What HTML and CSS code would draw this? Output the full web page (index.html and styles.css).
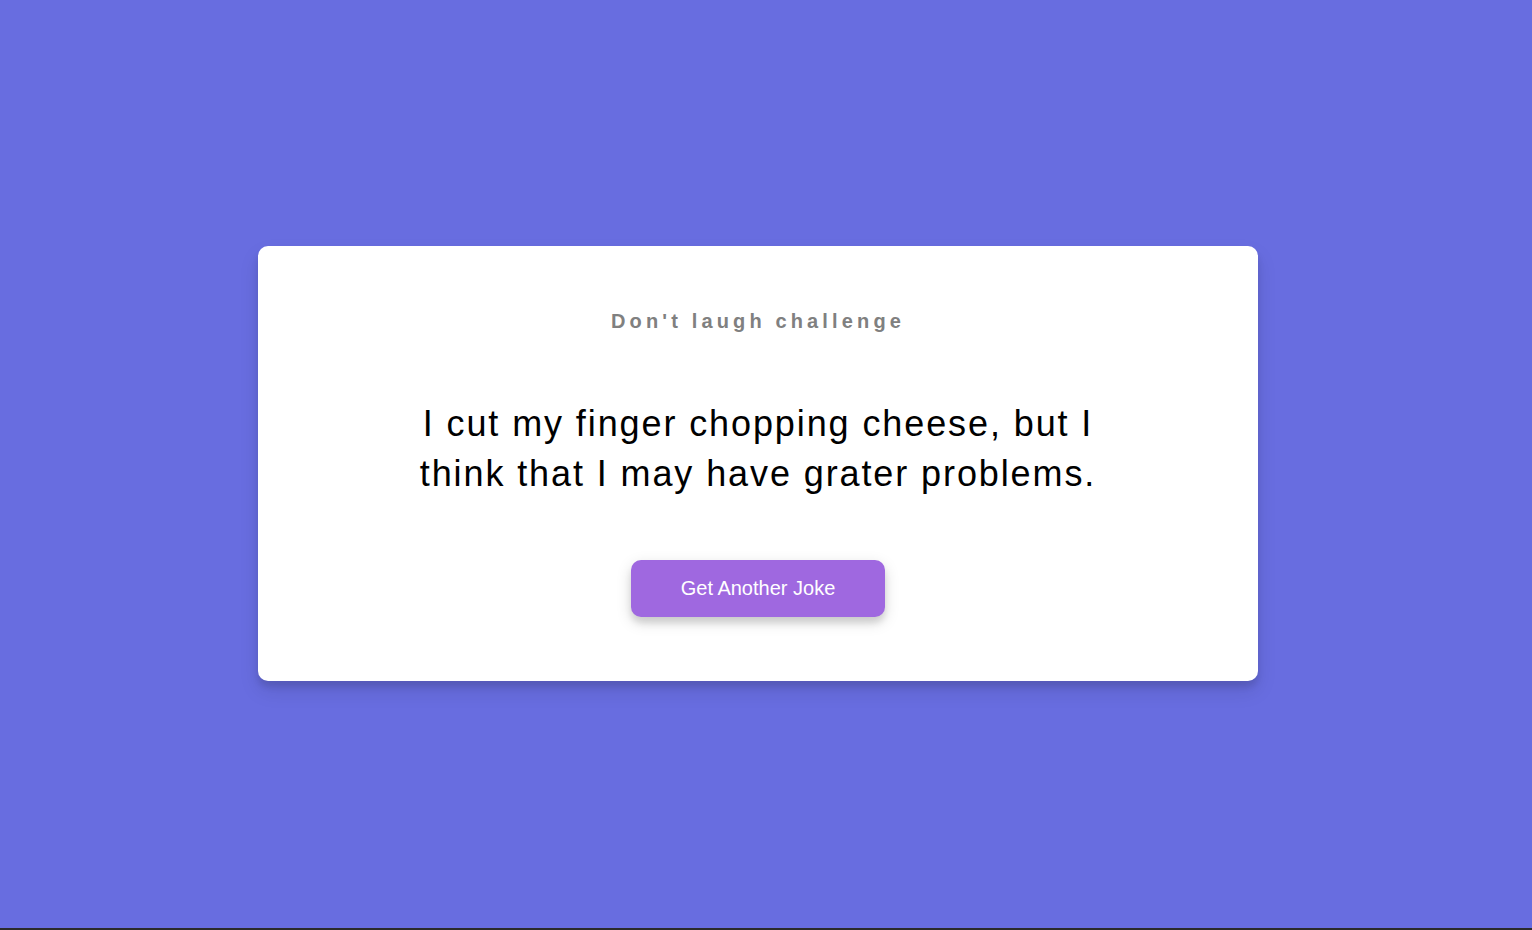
FILE: index.html
```html
<!DOCTYPE html>
<html lang="en">
<head>
<meta charset="UTF-8">
<title>Dad Jokes</title>
<link rel="stylesheet" href="styles.css">
</head>
<body>
  <div class="container">
    <h3 class="title">Don't laugh challenge</h3>
    <div class="joke">I cut my finger chopping cheese, but I think that I may have grater problems.</div>
    <button class="btn">Get Another Joke</button>
  </div>
</body>
</html>
```

FILE: styles.css
```css
* {
  box-sizing: border-box;
}

html, body {
  margin: 0;
}

body {
  background-color: #686de0;
  font-family: "Liberation Sans", Arial, sans-serif;
  display: flex;
  flex-direction: column;
  align-items: center;
  justify-content: center;
  height: 100vh;
  overflow: hidden;
  padding: 0 16px 1px 0;
  border-bottom: 2px solid #2b2b2b;
}

.container {
  background-color: #fff;
  border-radius: 10px;
  box-shadow: 0 10px 20px rgba(0, 0, 0, 0.1), 0 6px 6px rgba(0, 0, 0, 0.1);
  padding: 64px 20px;
  text-align: center;
  width: 1000px;
  max-width: 100%;
  display: flex;
  flex-direction: column;
  align-items: center;
}

.title {
  margin: 0;
  font-size: 20px;
  line-height: 23px;
  font-weight: bold;
  letter-spacing: 4.15px;
  color: #808080;
}

.joke {
  font-size: 36px;
  letter-spacing: 1.9px;
  line-height: 50px;
  margin: 66px auto 61px;
  max-width: 700px;
  color: #000;
}

.btn {
  background-color: #9f68e0;
  color: #fff;
  border: 0;
  border-radius: 10px;
  box-shadow: 0 5px 15px rgba(0, 0, 0, 0.15), 0 6px 6px rgba(0, 0, 0, 0.1);
  padding: 17px 50px;
  font-family: "Liberation Sans", Arial, sans-serif;
  font-size: 20px;
  line-height: 23px;
  cursor: pointer;
}
```
